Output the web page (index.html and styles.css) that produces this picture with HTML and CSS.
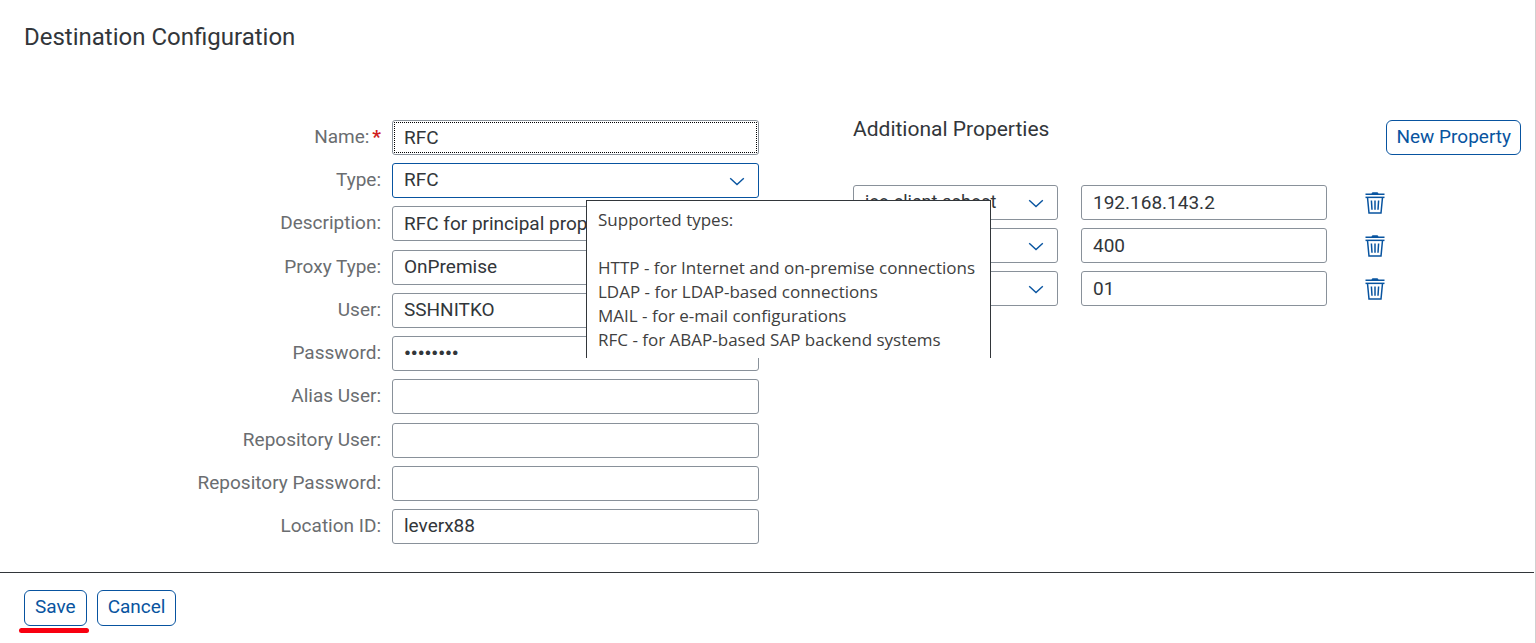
FILE: index.html
```html
<!DOCTYPE html>
<html lang="en">
<head>
<meta charset="utf-8">
<title>Destination Configuration</title>
<link rel="stylesheet" href="styles.css">
</head>
<body>
<svg class="sprite" aria-hidden="true">
  <symbol id="chevron" viewBox="0 0 16 9"><path d="M1.2 1.2 8 7.6 14.8 1.2" fill="none" stroke="currentColor" stroke-width="1.4"/></symbol>
  <symbol id="trash" viewBox="0 0 20 22"><path d="M6.500 1.500Q7 .2 8 .2h4q1 0 1.500 1.300h6V3H.5V1.500z" fill="currentColor"/><path d="M.5 4.600h19v1.500H.5z" fill="currentColor"/><path d="M2.500 5.500 4 21.100h12L17.500 5.500M6.400 8.500l.6 9.300M10 8.500v9.300M13.600 8.500l-.6 9.300" fill="none" stroke="currentColor" stroke-width="1.500"/></symbol>
</svg>
<form class="page">
  <h1 class="page-title">Destination Configuration</h1>
  <main class="content">
    <div class="fields">
      <label class="label" for="name">Name:<span class="required">*</span></label>
      <div class="field"><input class="control focused" id="name" type="text" value="RFC"></div>
      <label class="label" for="type">Type:</label>
      <div class="field">
        <select class="control active" id="type" aria-describedby="type-tip"><option>RFC</option><option>HTTP</option><option>LDAP</option><option>MAIL</option></select>
        <svg class="chevron"><use href="#chevron"/></svg>
        <div class="tooltip" id="type-tip" role="tooltip">
          <p>Supported types:</p>
          <ul class="tooltip-list">
            <li>HTTP - for Internet and on-premise connections</li>
            <li>LDAP - for LDAP-based connections</li>
            <li>MAIL - for e-mail configurations</li>
            <li>RFC - for ABAP-based SAP backend systems</li>
          </ul>
        </div>
      </div>
      <label class="label" for="description">Description:</label>
      <div class="field"><input class="control" id="description" type="text" value="RFC for principal propagation"></div>
      <label class="label" for="proxy">Proxy Type:</label>
      <div class="field"><select class="control" id="proxy"><option>OnPremise</option></select><svg class="chevron"><use href="#chevron"/></svg></div>
      <label class="label" for="user">User:</label>
      <div class="field"><input class="control" id="user" type="text" value="SSHNITKO"></div>
      <label class="label" for="password">Password:</label>
      <div class="field"><input class="control password" id="password" type="password" value="password"></div>
      <label class="label" for="alias">Alias User:</label>
      <div class="field"><input class="control" id="alias" type="text"></div>
      <label class="label" for="repo-user">Repository User:</label>
      <div class="field"><input class="control" id="repo-user" type="text"></div>
      <label class="label" for="repo-password">Repository Password:</label>
      <div class="field"><input class="control" id="repo-password" type="password"></div>
      <label class="label" for="location">Location ID:</label>
      <div class="field"><input class="control" id="location" type="text" value="leverx88"></div>
    </div>
    <section class="properties">
      <header class="properties-head">
        <h2 class="section-title">Additional Properties</h2>
        <button class="button" type="button">New Property</button>
      </header>
      <div class="property">
        <div class="field"><select class="control key" aria-label="Property 1"><option>jco.client.ashost</option></select><svg class="chevron"><use href="#chevron"/></svg></div>
        <input class="control" type="text" aria-label="Value 1" value="192.168.143.2">
        <button class="delete" type="button" aria-label="Delete property 1"><svg class="trash"><use href="#trash"/></svg></button>
      </div>
      <div class="property">
        <div class="field"><select class="control key" aria-label="Property 2"><option>jco.client.client</option></select><svg class="chevron"><use href="#chevron"/></svg></div>
        <input class="control" type="text" aria-label="Value 2" value="400">
        <button class="delete" type="button" aria-label="Delete property 2"><svg class="trash"><use href="#trash"/></svg></button>
      </div>
      <div class="property">
        <div class="field"><select class="control key" aria-label="Property 3"><option>jco.client.sysnr</option></select><svg class="chevron"><use href="#chevron"/></svg></div>
        <input class="control" type="text" aria-label="Value 3" value="01">
        <button class="delete" type="button" aria-label="Delete property 3"><svg class="trash"><use href="#trash"/></svg></button>
      </div>
    </section>
  </main>
  <footer class="actions">
    <button class="button marked" type="button">Save</button>
    <button class="button" type="button">Cancel</button>
  </footer>
</form>
</body>
</html>
```
FILE: styles.css
```css
* { box-sizing: border-box; }
body, h1, h2, p, ul { margin: 0; padding: 0; }
body {
  background: #fff;
  color: #32363a;
  font: 19px/24px Roboto, "Liberation Sans", sans-serif;
}
input, select, button { font: inherit; }
.sprite { display: none; }
.page {
  display: flex;
  flex-direction: column;
  min-height: 100vh;
  border-right: 1px solid #d0d0d0;
}
.page-title {
  padding: 21px 24px 67px;
  font-size: 24px;
  line-height: 32px;
  font-weight: 400;
}
.content {
  flex: 1;
  display: grid;
  grid-template-columns: 759fr 668fr;
  column-gap: 94px;
  padding: 0 14px 28px 0;
}
.fields {
  display: grid;
  grid-template-columns: 381fr 367fr;
  grid-auto-rows: 35px;
  column-gap: 11px;
  align-content: space-between;
}
.label {
  text-align: right;
  line-height: 34px;
  color: #6a6d70;
}
.required {
  margin-left: 3px;
  color: #d02020;
  font-weight: 700;
}
.field { position: relative; display: flex; }
.control {
  appearance: none;
  width: 100%;
  min-width: 0;
  height: 35px;
  margin: 0;
  padding: 0 11px 1px;
  border: 1px solid #89919a;
  border-radius: 3px;
  background: #fff;
  color: #32363a;
}
.key { font-size: 18px; }
.focused { outline: 1px dotted #000; outline-offset: -3px; }
.active { border-color: #0854a0; }
.password { font-weight: 700; }
.chevron {
  position: absolute;
  right: 14px;
  top: 14px;
  width: 16px;
  height: 9px;
  color: #0854a0;
  pointer-events: none;
}
.tooltip {
  position: absolute;
  z-index: 1;
  left: 194px;
  top: 37px;
  min-width: 405px;
  padding: 7px 11px 6px;
  border: 1px solid #32363a;
  border-bottom: 0;
  background: #fff;
  color: #404040;
  font-family: "Open Sans", "Noto Sans", sans-serif;
  font-size: 17px;
  white-space: nowrap;
}
.tooltip-list { padding-top: 24px; list-style: none; }
.properties { display: flex; flex-direction: column; gap: 8px; }
.properties-head {
  display: flex;
  justify-content: space-between;
  align-items: flex-start;
  padding-bottom: 22px;
}
.section-title { font-size: 21px; line-height: 18px; font-weight: 400; }
.property {
  display: grid;
  grid-template-columns: 205fr 246fr 171fr;
  column-gap: 23px;
}
.delete {
  justify-self: start;
  display: grid;
  place-items: center;
  width: 50px;
  height: 35px;
  padding: 0;
  border: 0;
  background: none;
  color: #0854a0;
}
.trash { width: 20px; height: 22px; }
.button {
  position: relative;
  height: 35px;
  padding: 0 9px 2px;
  border: 1px solid #0854a0;
  border-radius: 6px;
  background: #fff;
  color: #0854a0;
}
.actions {
  display: flex;
  gap: 10px;
  margin-right: 1px;
  padding: 17px 24px;
  border-top: 1px solid #32363a;
}
.actions .button { height: 36px; padding: 0 10px 2px; }
.marked::after {
  content: "";
  position: absolute;
  left: -6px;
  right: -3px;
  bottom: -8px;
  height: 5px;
  border-radius: 3px;
  background: #f80010;
}
```
